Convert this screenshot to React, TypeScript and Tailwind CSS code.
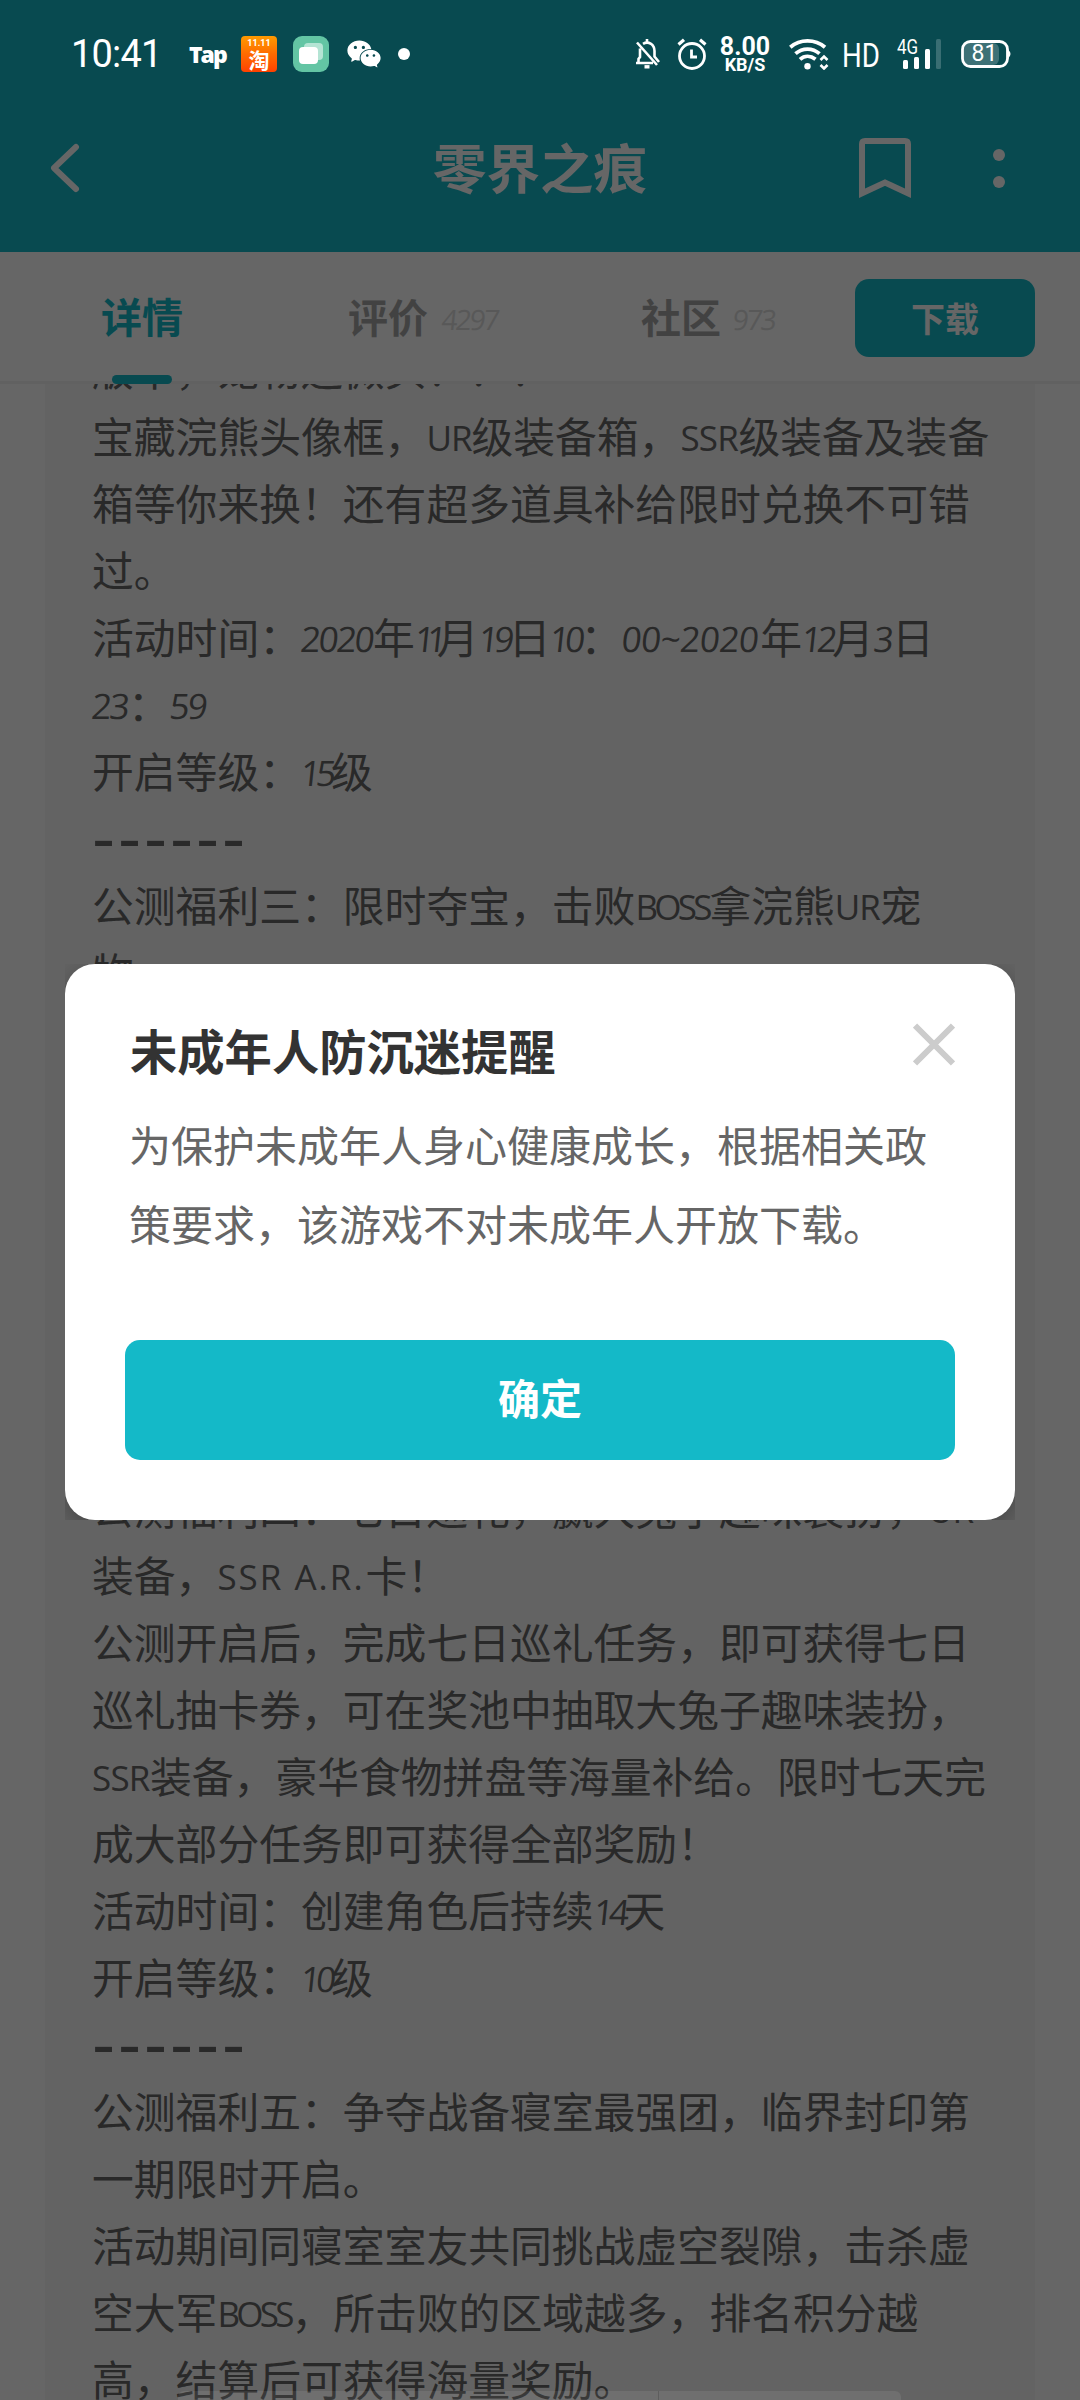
import { AiFillWechat } from "react-icons/ai";

// Latin runs are narrower than the Chinese grid, so each has its own width
const latinRuns: Record<string, { width: number; spacing: number }> = {
    UR: { width: 45, spacing: -1 },
    SSR: { width: 58, spacing: -0.8 },
    BOSS: { width: 74, spacing: -3.7 },
    "SSR A.R.": { width: 148, spacing: 2 },
    "2020": { width: 72, spacing: -2 },
    "00~2020": { width: 138, spacing: -0.5 },
    "11": { width: 22, spacing: -8 },
    "12": { width: 30, spacing: -4.5 },
    "14": { width: 30, spacing: -4.5 },
    "15": { width: 30, spacing: -4.5 },
    "19": { width: 30, spacing: -4.5 },
    "10": { width: 30, spacing: -4.5 },
    "23": { width: 36, spacing: -2 },
    "59": { width: 36, spacing: -2 },
    "3": { width: 18, spacing: -2 },
};

const lines = [
    "版本，宠物还微头！！！",
    "宝藏浣熊头像框，UR级装备箱，SSR级装备及装备",
    "箱等你来换！还有超多道具补给限时兑换不可错",
    "过。",
    "活动时间：2020年11月19日10：00~2020年12月3日",
    "23：59",
    "开启等级：15级",
    "------",
    "公测福利三：限时夺宝，击败BOSS拿浣熊UR宠",
    "物",
    "",
    "",
    "",
    "",
    "",
    "",
    "",
    "公测福利四：七日巡礼，赢大兔子趣味装扮，UR",
    "装备，SSR A.R.卡！",
    "公测开启后，完成七日巡礼任务，即可获得七日",
    "巡礼抽卡券，可在奖池中抽取大兔子趣味装扮，",
    "SSR装备，豪华食物拼盘等海量补给。限时七天完",
    "成大部分任务即可获得全部奖励！",
    "活动时间：创建角色后持续14天",
    "开启等级：10级",
    "------",
    "公测福利五：争夺战备寝室最强团，临界封印第",
    "一期限时开启。",
    "活动期间同寝室室友共同挑战虚空裂隙，击杀虚",
    "空大军BOSS，所击败的区域越多，排名积分越",
    "高，结算后可获得海量奖励。",
];

function Line({ text }: { text: string }) {
    if (text.startsWith("-")) {
        return (
            <div className="h-[67px] whitespace-nowrap pt-[3px] font-['DejaVu_Sans'] text-[64px] leading-[64px] tracking-[2.9px]">
                {text}
            </div>
        );
    }

    const runs = text.match(/[0-9A-Z.~ ]+|[^0-9A-Z.~ ]+/g) || [];

    return (
        <div className="flex h-[67px] items-center whitespace-nowrap">
            {runs.map((run, idx) => {
                const latin = latinRuns[run];
                if (!latin) return <span key={idx}>{run}</span>;
                return (
                    <span
                        key={idx}
                        className={`mt-[3px] font-['Open_Sans'] text-[35px] font-medium ${
                            /[0-9]/.test(run) ? "-skew-x-6" : ""
                        }`}
                        style={{
                            width: latin.width,
                            letterSpacing: latin.spacing,
                        }}
                    >
                        {run}
                    </span>
                );
            })}
        </div>
    );
}

function StatusBar() {
    return (
        <div className="absolute inset-x-0 top-0 flex h-[108px] items-center justify-between pl-[71px] pr-[68px] font-[Roboto] text-white">
            <div className="flex items-center">
                <span className="w-[118px] text-[38px] tracking-[-0.8px]">
                    10:41
                </span>
                <span className="w-[52px] font-['Open_Sans'] text-[23px] font-extrabold tracking-[-2px]">
                    Tap
                </span>
                <div className="flex h-9 w-9 flex-col items-center rounded-[4px] bg-linear-to-b from-[#ff9a00] via-[#ff6a00] to-[#ff4000] font-bold">
                    <span className="mt-[3px] text-[9px] leading-[9px]">
                        11.11
                    </span>
                    <span className="font-['Noto_Sans_CJK_SC',sans-serif] text-[21px] leading-[22px]">
                        淘
                    </span>
                </div>
                <svg className="ml-4" width="36" height="36" viewBox="0 0 36 36">
                    <rect width="36" height="36" rx="9" fill="#63c5a4" />
                    <rect x="11" y="7" width="19" height="17" rx="4" fill="#b4e4d4" />
                    <rect x="6" y="11" width="19" height="17" rx="4" fill="#fff" />
                </svg>
                <AiFillWechat className="ml-4 h-[38px] w-[38px]" />
                <span className="ml-[15px] h-3 w-3 rounded-full bg-white" />
            </div>

            <div className="flex items-center">
                <svg width="26" height="30" viewBox="0 0 26 30" fill="none" stroke="#fff" strokeWidth="2.6">
                    <path d="M3 3.5 23 26M2 24H19M4.5 23V20L6 18V9.5M9 4.8C12 3 14.500 3.200 17 4.800C20 7 20.500 9.500 20.500 12V17.500L25 23" />
                    <path d="M13 0V4" />
                    <path d="M10.500 27.800H15.500" strokeWidth="3.400" />
                </svg>
                <svg className="ml-[17px]" width="30" height="32" viewBox="0 0 30 32" fill="none" stroke="#fff" strokeWidth="2.800">
                    <circle cx="15" cy="18" r="12.500" />
                    <path d="M14.500 11.500V19H20" />
                    <path d="M1.500 6.500 7 1.800M28.500 6.500 23 1.800" strokeWidth="3.200" />
                </svg>
                <div className="ml-[13px] flex w-[50px] flex-col items-center font-bold">
                    <span className="text-[25px] leading-[19px]">8.00</span>
                    <span className="mt-[2px] text-[18px] leading-[14px]">
                        KB/S
                    </span>
                </div>
                <svg className="ml-[19px]" width="40" height="31" viewBox="0 0 40 31" fill="none" stroke="#fff" strokeWidth="3.800">
                    <path d="M1.300 8.300C11 -.2 26 -.2 36 8.300" />
                    <path d="M6.500 14.700C13.500 8.500 23.500 8.500 30.500 14.700" />
                    <path d="M11 20.300C15.500 16.300 21.500 16.300 26.500 20.300" />
                    <circle cx="18.500" cy="27.300" r="3.200" fill="#fff" stroke="none" />
                    <path d="M31.500 21 35 17.500 38.500 21M31.500 26 35 29.500 38.500 26" strokeWidth="2.600" />
                </svg>
                <span className="ml-[13px] mt-1 w-[55px] origin-left scale-x-[0.84] text-[33px]">
                    HD
                </span>
                <div className="relative h-[30px] w-[45px]">
                    <span className="absolute left-0 top-0 origin-left scale-x-[0.85] text-[20px] leading-[16px]">
                        4G
                    </span>
                    <svg width="45" height="30" viewBox="0 0 45 30" fill="#fff">
                        <rect x="6" y="21" width="5" height="9" rx="1.500" />
                        <rect x="17" y="18" width="5" height="12" rx="1.500" />
                        <rect x="28" y="10" width="5" height="20" rx="1.500" />
                        <rect x="39" width="5" height="30" rx="1.500" opacity=".2" />
                    </svg>
                </div>
                <div className="relative ml-[19px] flex h-[28px] w-[51px] items-center">
                    <svg className="absolute inset-0" width="51" height="28" viewBox="0 0 51 28">
                        <rect x="3" y="3" width="35" height="22" rx="6" fill="#fff" opacity=".22" />
                        <rect x="1.500" y="1.500" width="45" height="25" rx="8" fill="none" stroke="#fff" strokeWidth="2.800" />
                        <path d="M47 9.500Q52 14 47 18.500Z" fill="#fff" />
                    </svg>
                    <span className="w-[47px] text-center text-[23px] leading-[28px]">
                        81
                    </span>
                </div>
            </div>
        </div>
    );
}

function Header() {
    return (
        <header className="h-[252px] bg-[#14b9c8] pt-[108px] text-white">
            <div className="flex h-[120px] items-center">
                <svg className="ml-[50px]" width="30" height="50" viewBox="0 0 30 50" fill="none" stroke="currentColor" strokeWidth="6" strokeLinecap="round" strokeLinejoin="round">
                    <path d="M26 4 4 25 26 46" />
                </svg>
                <h1 className="-mt-1 ml-[353px] w-[216px] text-[53.5px] font-bold leading-[60px]">
                    零界之痕
                </h1>
                <svg className="ml-[210px]" width="52" height="60" viewBox="0 0 52 60" fill="none" stroke="currentColor" strokeWidth="6">
                    <path d="M3 55.300V6Q3 3 6 3H46Q49 3 49 6V55.300L26 44.500Z" />
                </svg>
                <div className="ml-[82px] flex flex-col gap-[15px]">
                    <span className="h-3 w-3 rounded-full bg-white" />
                    <span className="h-3 w-3 rounded-full bg-white" />
                </div>
            </div>
        </header>
    );
}

function Tabs() {
    return (
        <nav className="relative z-10 flex h-[132px] border-b-[3px] border-[#f2f2f2] bg-white text-[40px] font-bold text-[#a6a6a6]">
            <div className="relative ml-[101px] flex w-[247px] items-center pb-0.5 text-[41px] text-[#14b9c8]">
                详情
                <span className="absolute -bottom-[3px] left-[11px] h-[9px] w-[60px] rounded-[5px] bg-[#14b9c8]" />
            </div>
            <div className="flex w-[293px] items-center pb-0.5">
                评价
                <span className="ml-[14px] mt-[6px] font-['Open_Sans'] text-[28px] font-normal tracking-[-2px] text-[#dcdcdc] -skew-x-6">
                    4297
                </span>
            </div>
            <div className="flex w-[214px] items-center pb-0.5">
                社区
                <span className="ml-[12px] mt-[6px] font-['Open_Sans'] text-[28px] font-normal tracking-[-2px] text-[#dcdcdc] -skew-x-6">
                    973
                </span>
            </div>
            <button className="mt-[27px] h-[78px] w-[180px] rounded-[14px] bg-[#14b9c8] text-[34px] leading-[76px] text-white">
                下载
            </button>
        </nav>
    );
}

function Dialog() {
    return (
        <div className="overflow-hidden">
            <div className="h-[556px] w-[950px] rounded-[30px] bg-white px-[60px] pt-[56px] shadow-[0_8px_24px_rgba(0,0,0,0.3)]">
                <div className="flex justify-between pl-[5px]">
                    <h2 className="-mt-[3px] text-[47.3px] font-bold leading-[65px] text-[#333]">
                        未成年人防沉迷提醒
                    </h2>
                    <svg className="mt-[3px]" width="42" height="43" viewBox="0 0 42 43" stroke="#ccc" strokeWidth="6">
                        <path d="M2 2.500 40 40.500M40 2.500 2 40.500" />
                    </svg>
                </div>
                <p className="mt-[22px] h-[236px] whitespace-nowrap pl-[4px] text-[42px] leading-[79px] text-[#666]">
                    为保护未成年人身心健康成长，根据相关政
                    <br />
                    策要求，该游戏不对未成年人开放下载。
                </p>
                <button className="h-[120px] w-[830px] rounded-[15px] bg-[#14b9c8] pb-1.5 text-[42px] font-bold leading-[114px] text-white">
                    确定
                </button>
            </div>
        </div>
    );
}

export default function App() {
    return (
        <div className="relative h-[2400px] w-[1080px] overflow-hidden bg-white font-['Noto_Sans_CJK_SC',sans-serif]">
            <Header />
            <Tabs />
            <main className="mx-[45px] h-[2016px] overflow-hidden bg-[#f7f7f7]">
                <div className="-mt-[49px] pl-[47px] text-[41.8px] leading-[67px] text-[#666]">
                    {lines.map((text, idx) => (
                        <Line key={idx} text={text} />
                    ))}
                </div>
            </main>

            <div className="absolute inset-0 z-20 bg-black/60">
                <div className="flex justify-center pt-[964px]">
                    <Dialog />
                </div>
                <StatusBar />
                <div className="absolute bottom-0 left-[178px] flex h-[9px] w-[723px] rounded-t-[6px] bg-white/8">
                    <span className="ml-[480px] h-full w-px bg-black/15" />
                </div>
            </div>
        </div>
    );
}
